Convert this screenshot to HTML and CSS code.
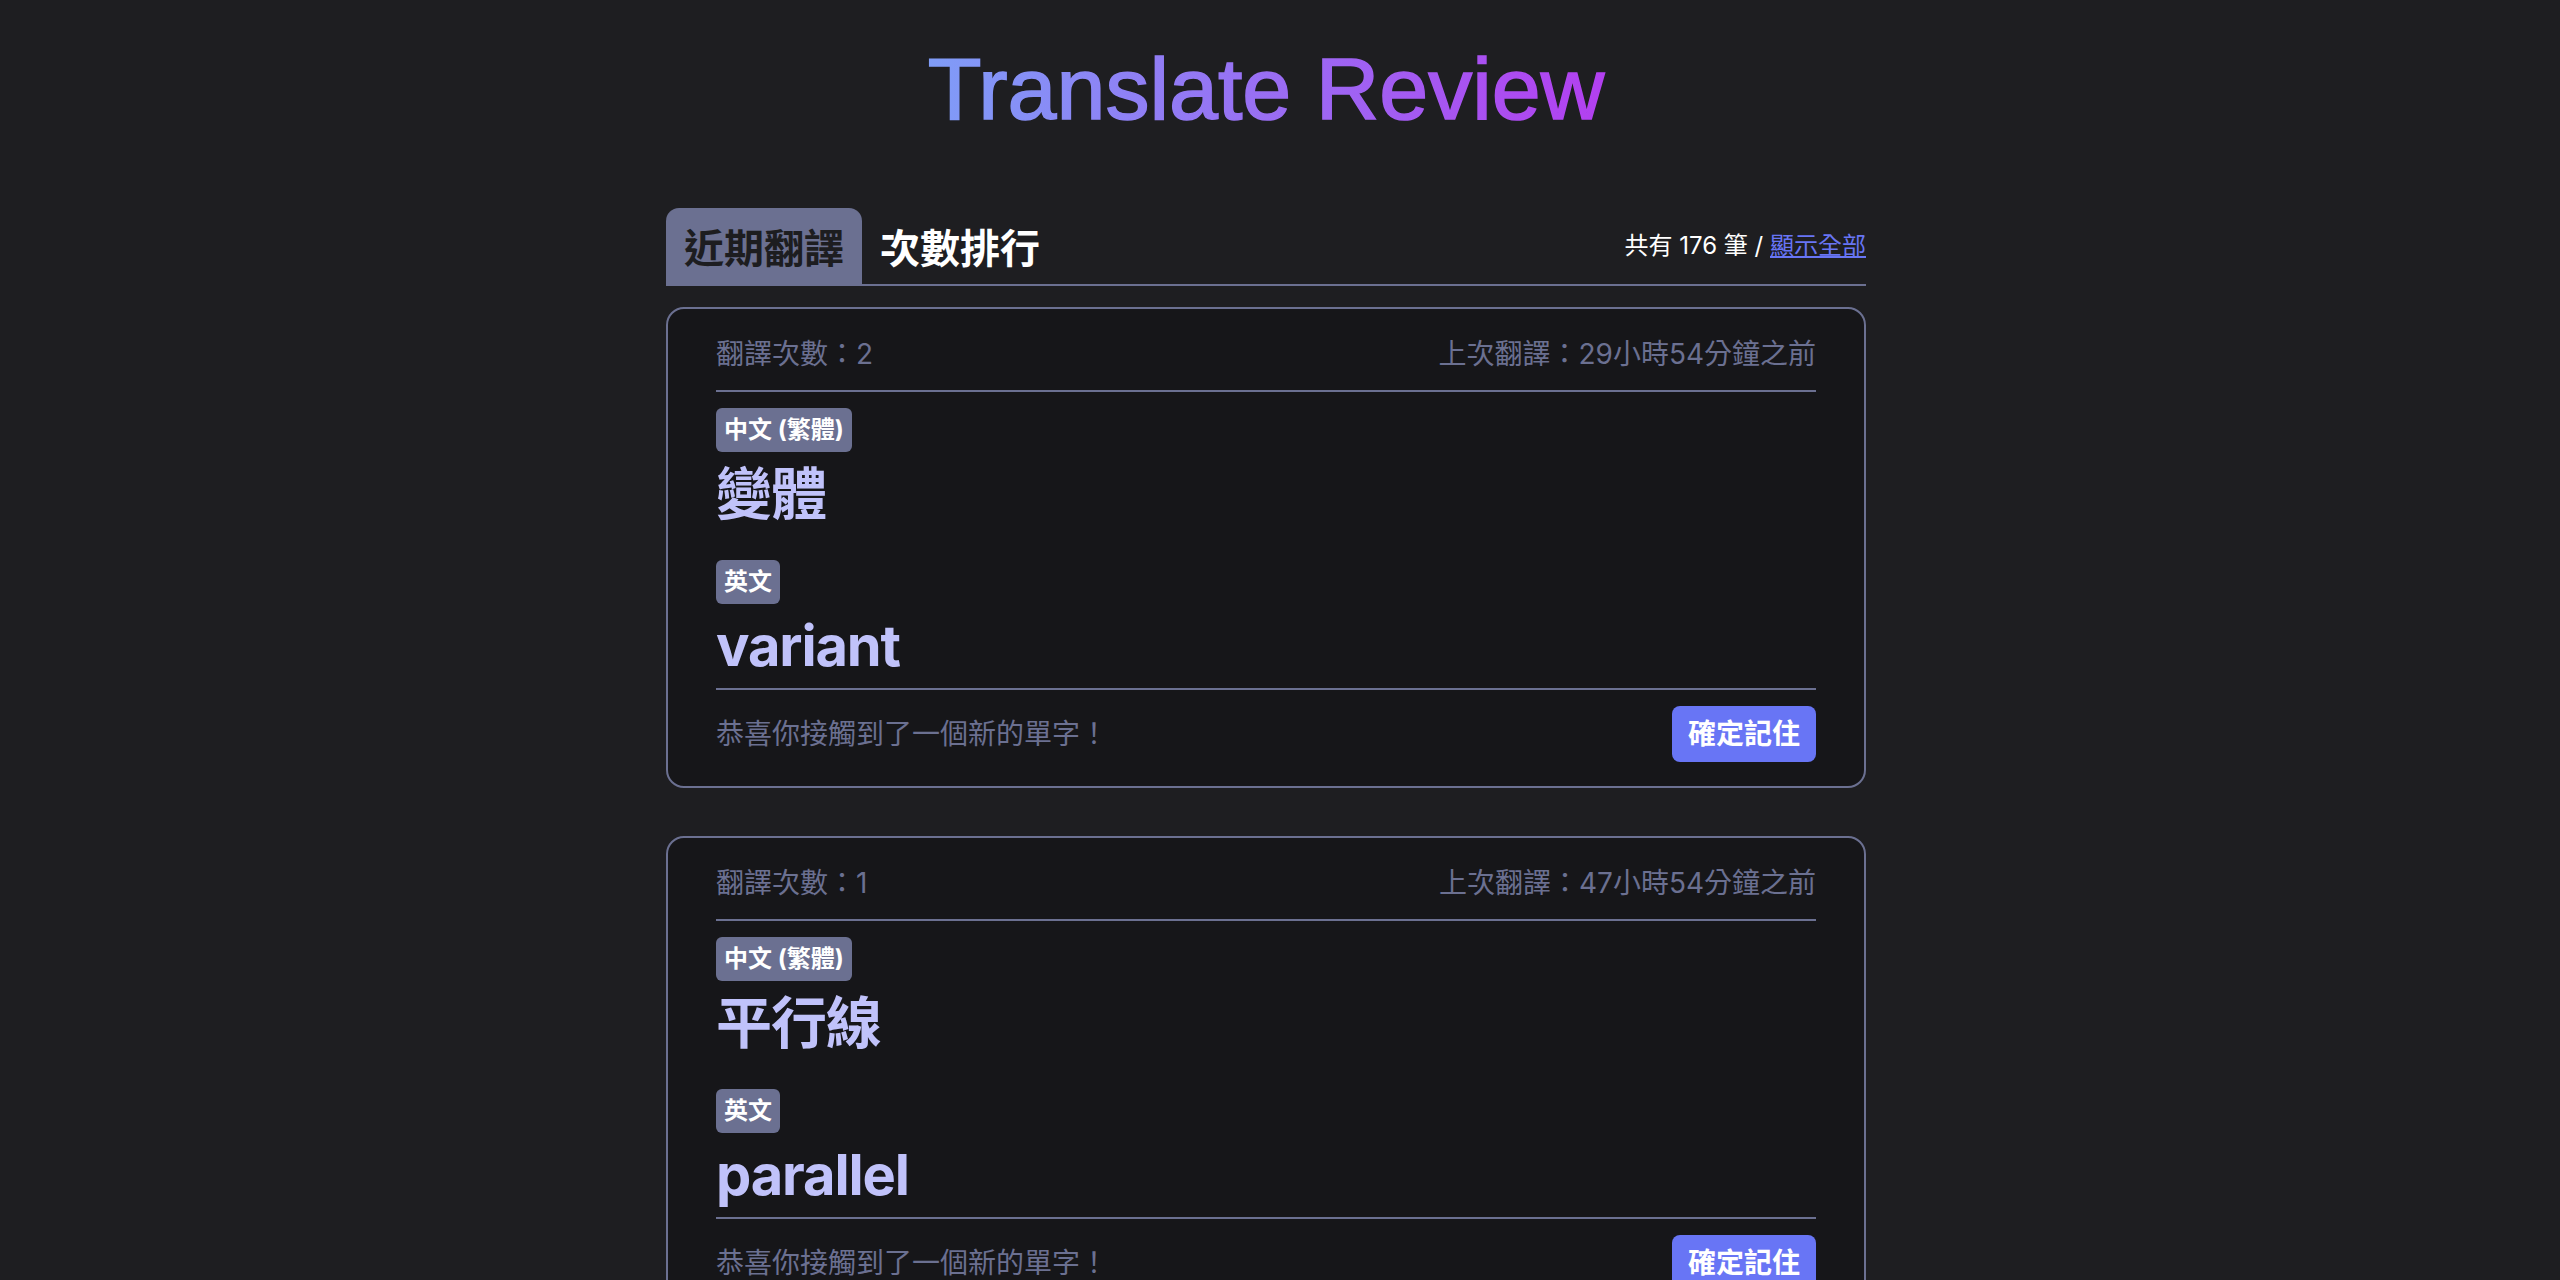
FILE: index.html
```html
<!DOCTYPE html>
<html lang="zh-Hant">
<head>
<meta charset="utf-8">
<title>Translate Review</title>
<link rel="stylesheet" href="styles.css">
</head>
<body>
  <h1 class="title">
    <svg class="title-svg" width="700" height="101" viewBox="0 0 700 101">
      <defs>
        <linearGradient id="tg" gradientUnits="userSpaceOnUse" x1="8" y1="0" x2="692" y2="0">
          <stop offset="0" stop-color="#7f9df7"/>
          <stop offset="1" stop-color="#b33ff0"/>
        </linearGradient>
      </defs>
      <text x="350" y="81" text-anchor="middle" fill="url(#tg)" stroke="url(#tg)" stroke-width="1.6">Translate Review</text>
    </svg>
  </h1>
  <main class="container">
    <nav class="tabs">
      <div class="tab active">近期翻譯</div>
      <div class="tab">次數排行</div>
      <div class="summary">共有 176 筆 / <a href="#">顯示全部</a></div>
    </nav>
    <section class="cards">
      <article class="card">
        <header class="card-head">
          <span>翻譯次數：2</span>
          <span>上次翻譯：29小時54分鐘之前</span>
        </header>
        <div class="card-body">
          <div class="lang">
            <span class="badge">中文 (繁體)</span>
            <div class="word">變體</div>
          </div>
          <div class="lang">
            <span class="badge">英文</span>
            <div class="word">variant</div>
          </div>
        </div>
        <footer class="card-foot">
          <span>恭喜你接觸到了一個新的單字！</span>
          <button class="btn">確定記住</button>
        </footer>
      </article>
      <article class="card">
        <header class="card-head">
          <span>翻譯次數：1</span>
          <span>上次翻譯：47小時54分鐘之前</span>
        </header>
        <div class="card-body">
          <div class="lang">
            <span class="badge">中文 (繁體)</span>
            <div class="word">平行線</div>
          </div>
          <div class="lang">
            <span class="badge">英文</span>
            <div class="word">parallel</div>
          </div>
        </div>
        <footer class="card-foot">
          <span>恭喜你接觸到了一個新的單字！</span>
          <button class="btn">確定記住</button>
        </footer>
      </article>
    </section>
  </main>
</body>
</html>
```
FILE: styles.css
```css
html {
  background: #1e1e21;
  scrollbar-width: none;
}
html::-webkit-scrollbar { display: none; }

body {
  margin: 0;
  padding: 38px 28px 40px 0;
  font-family: "Inter", "Noto Sans CJK TC", sans-serif;
  color: #ffffff;
}

.title {
  display: flex;
  justify-content: center;
  margin: 0 0 69px;
  height: 101px;
}

.title-svg {
  display: block;
  font-family: "Liberation Sans", Arial, sans-serif;
  font-size: 88px;
  font-weight: 400;
}

.container {
  width: 1200px;
  margin: 0 auto;
}

.tabs {
  display: flex;
  align-items: center;
  border-bottom: 2px solid #6b7091;
}

.tab {
  font-family: "Noto Sans CJK TC", sans-serif;
  font-size: 40px;
  font-weight: 700;
  line-height: 60px;
  padding: 8px 18px;
  border-radius: 13px 13px 0 0;
  color: #ffffff;
}

.tab.active {
  background: #6b7091;
  color: #1d1d20;
}

.summary {
  margin-left: auto;
  font-size: 24px;
  line-height: 36px;
  color: #ffffff;
}

.summary a {
  color: #6875f5;
  text-decoration: underline;
}

.cards {
  display: flex;
  flex-direction: column;
  gap: 48px;
  margin-top: 21px;
}

.card {
  background: #161619;
  border: 2px solid #6b7091;
  border-radius: 18px;
  padding: 24px 48px;
}

.card-head {
  display: flex;
  justify-content: space-between;
  font-size: 28px;
  line-height: 42px;
  color: #6b7091;
  padding-bottom: 15px;
  border-bottom: 2px solid #6b7091;
}

.card-body {
  display: flex;
  flex-direction: column;
  gap: 24px;
  padding-top: 16px;
}

.lang {
  display: flex;
  flex-direction: column;
  align-items: flex-start;
}

.badge {
  background: #6b7091;
  color: #ffffff;
  font-size: 24px;
  font-weight: 700;
  line-height: 36px;
  padding: 4px 8px;
  border-radius: 6px;
}

.word {
  font-size: 56px;
  font-weight: 700;
  line-height: 84px;
  letter-spacing: -0.02em;
  color: #c0c2fa;
}

.card-foot {
  display: flex;
  justify-content: space-between;
  align-items: center;
  border-top: 2px solid #6b7091;
  padding-top: 16px;
  font-size: 28px;
  line-height: 42px;
  color: #6b7091;
}

.btn {
  font-family: "Inter", "Noto Sans CJK TC", sans-serif;
  background: #6875f5;
  color: #ffffff;
  border: none;
  border-radius: 8px;
  font-size: 28px;
  font-weight: 700;
  line-height: 40px;
  padding: 8px 16px;
}
```
